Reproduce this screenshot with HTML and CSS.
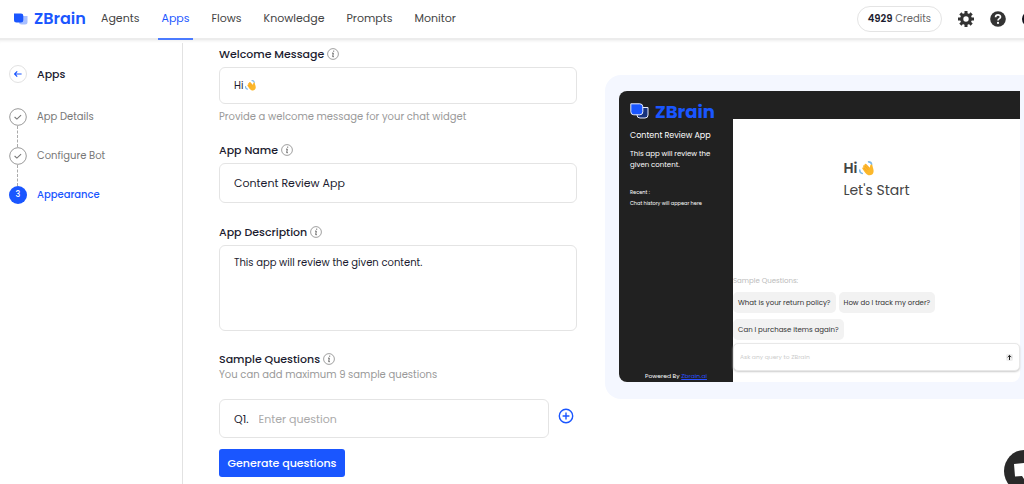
FILE: index.html
```html
<!DOCTYPE html>
<html lang="en">
<head>
    <meta charset="UTF-8">
    <title>ZBrain - Appearance</title>
    <link rel="stylesheet" href="styles.css">
</head>
<body>

<!-- shared icons -->
<svg class="defs" width="0" height="0" aria-hidden="true">
    <symbol id="info" viewBox="0 0 12 12">
        <circle cx="6" cy="6" r="5.4" fill="none" stroke="#888" stroke-width="0.8"/>
        <path d="M6.7 3v.4M5.4 5.100h.9L5.700 8.700h.8" fill="none" stroke="#444" stroke-width="0.8" stroke-linecap="round"/>
    </symbol>
    <symbol id="check" viewBox="0 0 18 18">
        <circle cx="9" cy="9" r="8.3" fill="#fff" stroke="#999" stroke-width="1"/>
        <path d="M5.6 9l2.3 2.1 4.2-4" fill="none" stroke="#777" stroke-width="1.1"/>
    </symbol>
    <symbol id="wave" viewBox="0 0 16 16">
        <path d="M.8 9.600c-.1 2 .9 3.400 2.700 3.700M10.200.9c2 0 3 .9 3.300 2.600" fill="none" stroke="#7db9e8" stroke-width="1.700" stroke-linecap="round"/>
        <path d="M3.600 8.200c-.6-1 .8-1.700 1.500-.9l-.6-1.300c-.5-1.300 1-1.900 1.700-.9L6 4.300C5.700 3 7.200 2.600 7.900 3.700l3.600 3.400.5-2.400c.3-1.500 2.300-1.200 2.400.3.200 1.900 1.600 4.300 1.100 6.800-.5 2.700-3 4.100-5.500 3.300C7.500 14.300 5.600 11.200 3.600 8.200z" fill="#fcb82b"/>
        <path d="M5.100 7.300l3 3.500M6.200 5.100l3.300 3.900M7.900 3.700l2.900 3.600" fill="none" stroke="#ee8f1c" stroke-width=".5" stroke-linecap="round"/>
    </symbol>
</svg>

<header class="navbar">
    <a href="#" class="logo">
        <svg width="14" height="12" viewBox="0 0 14 12" aria-hidden="true">
            <path d="M5 3h8.500v6a2.500 2.500 0 0 1-2.500 2.500H7.500A2.500 2.500 0 0 1 5 9z" fill="#a9c0ff"/>
            <path d="M0 .5h7A2.300 2.300 0 0 1 9.300 2.800v4.400A2.300 2.300 0 0 1 7 9.500H2.500A2.500 2.500 0 0 1 0 7z" fill="#1a56ff"/>
        </svg>
        <span>ZBrain</span>
    </a>
    <nav class="menu">
        <a href="#">Agents</a>
        <a href="#" class="active">Apps</a>
        <a href="#">Flows</a>
        <a href="#">Knowledge</a>
        <a href="#">Prompts</a>
        <a href="#">Monitor</a>
    </nav>
    <div class="user-tools">
        <div class="credits"><strong>4929</strong> Credits</div>
        <button class="icon-btn" aria-label="Settings">
            <svg width="16" height="16" viewBox="0 0 16 16">
                <circle cx="8" cy="8" r="4.300" fill="none" stroke="#333" stroke-width="3.200"/>
                <path d="M8 0v3M8 13v3M0 8h3M13 8h3M2.340 2.340l2.100 2.100M11.560 11.560l2.100 2.100M2.340 13.660l2.100-2.100M11.560 4.440l2.100-2.100" stroke="#333" stroke-width="3"/>
            </svg>
        </button>
        <button class="icon-btn" aria-label="Help">
            <svg width="16" height="16" viewBox="0 0 16 16">
                <circle cx="8" cy="8" r="7.800" fill="#333"/>
                <path d="M5.600 6.200c0-3 4.900-2.900 4.900-.2C10.500 7.700 8 7.600 8 9.500" fill="none" stroke="#fff" stroke-width="1.700"/>
                <circle cx="8" cy="11.900" r="1.100" fill="#fff"/>
            </svg>
        </button>
        <span class="avatar"></span>
    </div>
</header>

<div class="page">
    <aside class="sidebar">
        <div class="back">
            <a href="#" class="back-btn" aria-label="Back">
                <svg width="8" height="8" viewBox="0 0 8 8"><path d="M7.600 4H.8M3.200 1.400L.6 4l2.600 2.600" fill="none" stroke="#1a56ff" stroke-width="1.200"/></svg>
            </a>
            <h2>Apps</h2>
        </div>
        <ol class="steps">
            <li><svg width="18" height="18"><use href="#check"/></svg><span>App Details</span></li>
            <li><svg width="18" height="18"><use href="#check"/></svg><span>Configure Bot</span></li>
            <li class="current"><b>3</b><span>Appearance</span></li>
        </ol>
    </aside>

    <main class="content">
        <form class="app-form">
            <div class="group welcome">
                <label for="welcome">Welcome Message <svg width="12" height="12"><use href="#info"/></svg></label>
                <div class="box">
                    <input id="welcome" type="text" value="Hi">
                    <svg width="11" height="11"><use href="#wave"/></svg>
                </div>
                <p class="hint">Provide a welcome message for your chat widget</p>
            </div>
            <div class="group name">
                <label for="name">App Name <svg width="12" height="12"><use href="#info"/></svg></label>
                <input id="name" class="box" type="text" value="Content Review App">
            </div>
            <div class="group desc">
                <label for="desc">App Description <svg width="12" height="12"><use href="#info"/></svg></label>
                <textarea id="desc" class="box">This app will review the given content.</textarea>
            </div>
            <div class="group questions">
                <label for="q1">Sample Questions <svg width="12" height="12"><use href="#info"/></svg></label>
                <p class="hint">You can add maximum 9 sample questions</p>
                <div class="question-row">
                    <div class="box">
                        <span>Q1.</span>
                        <input id="q1" type="text" placeholder="Enter question">
                    </div>
                    <button type="button" class="icon-btn" aria-label="Add question">
                        <svg width="16" height="16" viewBox="0 0 16 16"><circle cx="8" cy="8" r="6.700" fill="none" stroke="#1a56ff" stroke-width="1.400"/><path d="M8 4.600v6.800M4.600 8h6.800" stroke="#1a56ff" stroke-width="1.400"/></svg>
                    </button>
                </div>
                <button type="button" class="generate-btn">Generate questions</button>
            </div>
        </form>

        <section class="preview">
            <div class="chat-app">
                <div class="chat-side">
                    <div class="chat-logo">
                        <svg width="19" height="16" viewBox="0 0 19 16" aria-hidden="true">
                            <path d="M7 4.500h11v7.500a3 3 0 0 1-3 3h-5a3 3 0 0 1-3-3z" fill="#17327c" stroke="#e8edff"/>
                            <path d="M.8.8h9A3 3 0 0 1 12.800 3.800v5a3 3 0 0 1-3 3h-6a3 3 0 0 1-3-3z" fill="#1a56ff" stroke="#e8edff"/>
                        </svg>
                        <span>ZBrain</span>
                    </div>
                    <h3>Content Review App</h3>
                    <p class="about">This app will review the given content.</p>
                    <p class="history">Recent :</p>
                    <p class="history">Chat history will appear here</p>
                    <p class="powered">Powered By <a href="#">Zbrain.ai</a></p>
                </div>
                <div class="chat-main">
                    <div class="chat-top"></div>
                    <div class="greeting">
                        <div>
                            <strong>Hi <svg width="15" height="15"><use href="#wave"/></svg></strong>
                            <span>Let's Start</span>
                        </div>
                    </div>
                    <p class="chips-title">Sample Questions:</p>
                    <div class="chips">
                        <button>What is your return policy?</button>
                        <button>How do I track my order?</button>
                        <button>Can I purchase items again?</button>
                    </div>
                    <div class="query">
                        <input type="text" aria-label="Query" placeholder="Ask any query to ZBrain">
                        <button aria-label="Send"><svg width="7" height="7" viewBox="0 0 7 7"><path d="M3.500 6V1.500M1.700 3.200l1.800-1.800 1.800 1.800" fill="none" stroke="#222"/></svg></button>
                    </div>
                </div>
            </div>
        </section>
    </main>
</div>

<button class="chat-bubble" aria-label="Open chat">
    <svg width="20" height="18" viewBox="0 0 20 18"><path d="M0 2l20-2v15l-7-1-3 3-2-3-7 .500z" fill="#fff"/></svg>
</button>

</body>
</html>
```
FILE: styles.css
```css
* {
    box-sizing: border-box;
}
body {
    font-family: Poppins, Inter, "Open Sans", sans-serif;
    font-size: 11px;
    line-height: 16px;
    margin: 0;
    height: 100vh;
    overflow: hidden;
    background: #fff;
    color: #1b1b2f;
}
h2, h3, p, ol {
    margin: 0;
    padding: 0;
}
a {
    color: inherit;
    text-decoration: none;
}
button, input, textarea {
    font: inherit;
    color: inherit;
}
button {
    cursor: pointer;
}
svg {
    flex-shrink: 0;
}
.defs {
    position: absolute;
}

/* header */
.navbar {
    display: flex;
    align-items: center;
    height: 40px;
    padding: 0 0 3px 14px;
    overflow: hidden;
    box-shadow: inset 0 -2px #ececec;
}
.logo {
    display: flex;
    align-items: center;
    gap: 6px;
    width: 87px;
    font-size: 16px;
    font-weight: 600;
    color: #1a56ff;
}
.menu {
    display: flex;
    gap: 22px;
    align-self: stretch;
    flex: 1;
    line-height: 37px;
    color: #444;
}
.menu a {
    height: 40px;
}
.menu .active {
    color: #1a56ff;
    border-bottom: 2px solid #4b7bff;
    padding: 0 3px;
    margin: 0 -3px;
}
.user-tools {
    display: flex;
    align-items: center;
    gap: 16px;
    flex-shrink: 0;
    margin-right: -14px;
}
.credits {
    border: 1px solid #e4e4e4;
    border-radius: 13px;
    padding: 4px 10px;
    font-size: 10px;
    color: #666;
}
.credits strong {
    font-weight: 600;
    color: #1b1b2f;
}
.icon-btn {
    display: flex;
    border: none;
    background: none;
    padding: 0;
}
.avatar {
    width: 16px;
    height: 16px;
    border-radius: 50%;
    background: #12121c;
}

/* sidebar */
.page {
    display: flex;
    height: calc(100vh - 40px);
    box-shadow: inset 0 3px 3px -2px #eee;
}
.sidebar {
    width: 183px;
    flex-shrink: 0;
    margin-top: 3px;
    padding: 22px 9px;
    border-right: 1px solid #e2e2e2;
}
.back {
    display: flex;
    align-items: center;
    gap: 10px;
    margin-bottom: 25px;
}
.back h2 {
    font-size: 11px;
    font-weight: 500;
}
.back-btn {
    display: flex;
    align-items: center;
    justify-content: center;
    width: 18px;
    height: 18px;
    border: 1px solid #e2e2e2;
    border-radius: 50%;
}
.steps {
    list-style: none;
}
.steps li {
    position: relative;
    display: flex;
    align-items: center;
    gap: 10px;
    height: 18px;
    margin-bottom: 21px;
    font-size: 10px;
    color: #777;
}
.steps li:not(:last-child)::after {
    content: "";
    position: absolute;
    left: 8px;
    top: 18px;
    height: 21px;
    border-left: 1px dashed #aaa;
}
.steps b {
    width: 18px;
    line-height: 18px;
    border-radius: 50%;
    background: #1a56ff;
    color: #fff;
    font-size: 8px;
    font-weight: 500;
    text-align: center;
}
.steps .current {
    color: #1a56ff;
    font-weight: 500;
}

/* form */
.content {
    display: flex;
    align-items: flex-start;
    gap: 28px;
    flex: 1;
    min-width: 0;
    padding: 6px 0 0 36px;
}
.app-form {
    width: 358px;
    flex-shrink: 0;
}
.group label {
    display: flex;
    align-items: center;
    gap: 3px;
    font-weight: 500;
}
.group .box {
    display: flex;
    align-items: center;
    width: 100%;
    height: 40px;
    margin-top: 5px;
    padding: 0 14px;
    border: 1px solid #e4e4e4;
    border-radius: 6px;
    background: #fff;
}
.box input {
    border: none;
    outline: none;
    padding: 0;
    background: none;
}
.welcome .box {
    height: 37px;
    margin-bottom: 5px;
}
.welcome input {
    width: 11px;
    font-size: 10px;
}
.welcome {
    margin-bottom: 17px;
}
.hint {
    font-size: 10px;
    color: #999;
}
.name {
    margin-bottom: 21px;
}
.desc .box {
    height: 86px;
    padding: 9px 14px;
    font-size: 10px;
    resize: none;
}
.desc {
    margin-bottom: 20px;
}
.group .question-row {
    display: flex;
    align-items: center;
    gap: 9px;
    margin: 16px 0 11px;
}
.question-row .box {
    width: 330px;
    height: 39px;
    margin: 0;
    gap: 10px;
}
.question-row input {
    flex: 1;
}
.question-row .icon-btn {
    margin-bottom: 6px;
}
input::placeholder {
    color: #aaa;
    opacity: 1;
}
.generate-btn {
    border: none;
    border-radius: 3px;
    background: #1a56ff;
    color: #fff;
    font-weight: 500;
    width: 126px;
    padding: 6px 0;
    white-space: nowrap;
}

/* preview */
.preview {
    flex: 1;
    min-width: 0;
    margin-top: 29px;
    padding: 16px 4px 17px 14px;
    border-radius: 16px 0 0 16px;
    background: #f4f7ff;
}
.chat-app {
    display: flex;
    height: 291px;
    border-radius: 8px 0 8px 8px;
    background: #fff;
}
.chat-side {
    display: flex;
    flex-direction: column;
    width: 114px;
    flex-shrink: 0;
    padding: 11px 11px 0;
    border-radius: 8px 0 0 8px;
    background: #212121;
    color: #fff;
    font-size: 7px;
    line-height: 11px;
}
.chat-logo {
    display: flex;
    align-items: center;
    gap: 6px;
    height: 18px;
    margin-bottom: 10px;
    font-size: 18px;
    font-weight: 700;
    color: #1a56ff;
}
.chat-side h3 {
    font-size: 8px;
    font-weight: 400;
    line-height: 12px;
    margin-bottom: 6px;
    white-space: nowrap;
}
.about {
    margin-bottom: 17px;
}
.history {
    font-size: 5px;
    white-space: nowrap;
}
.powered {
    margin-top: auto;
    text-align: center;
    font-size: 6px;
}
.powered a {
    color: #2a50ff;
    text-decoration: underline;
}
.chat-main {
    display: flex;
    flex-direction: column;
    flex: 1;
    min-width: 0;
    padding-bottom: 11px;
}
.chat-top {
    height: 28px;
    background: #212121;
}
.greeting {
    display: flex;
    justify-content: center;
    flex: 1;
    padding-top: 38px;
    font-size: 14px;
    line-height: 22px;
    color: #444;
}
.greeting strong {
    display: flex;
    align-items: center;
    gap: 2px;
    font-weight: 600;
}
.chips-title {
    margin-bottom: 6px;
    font-size: 7px;
    line-height: 11px;
    color: #bbb;
}
.chips {
    display: flex;
    flex-wrap: wrap;
    gap: 6px 3px;
    margin-bottom: 3px;
}
.chips button {
    height: 21px;
    padding: 0 5px;
    border: none;
    border-radius: 5px;
    background: #f2f2f2;
    color: #333;
    font-size: 7px;
}
.query {
    display: flex;
    align-items: center;
    height: 28px;
    padding: 0 6px;
    border: 1px solid #e8e8e8;
    border-radius: 5px;
    background: #fff;
    box-shadow: 0 1px 2px #ccc;
}
.query input {
    flex: 1;
    min-width: 0;
    padding: 0;
    border: none;
    outline: none;
    font-size: 6px;
}
.query input::placeholder {
    color: #ccc;
}
.query button {
    display: flex;
    padding: 0;
    border: none;
    border-radius: 2px;
    background: #eee;
}

.chat-bubble {
    position: fixed;
    right: -20px;
    bottom: -8px;
    display: flex;
    align-items: center;
    justify-content: center;
    width: 40px;
    height: 42px;
    padding: 0;
    border: none;
    border-radius: 50%;
    background: #292929;
}
```
